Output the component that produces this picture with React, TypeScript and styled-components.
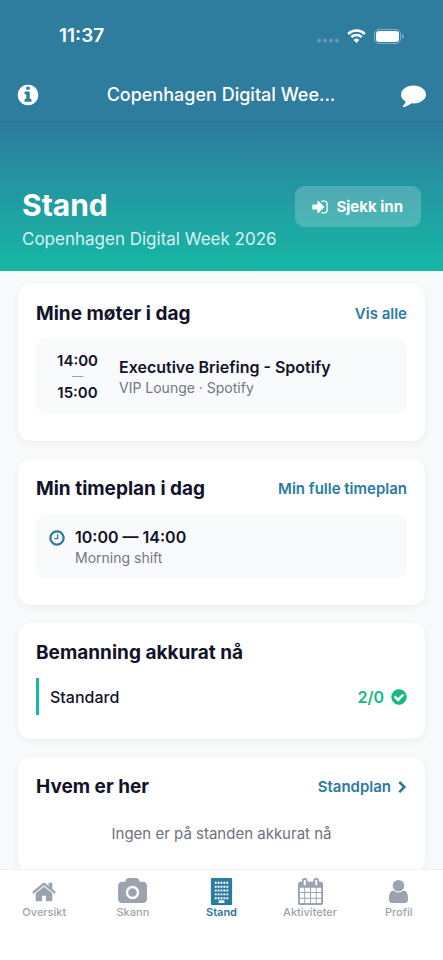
import React from "react";
import styled, { createGlobalStyle } from "styled-components";

const GlobalStyle = createGlobalStyle`
  *, *::before, *::after { box-sizing: border-box; }
  body {
    margin: 0;
    background: #f8fafc;
    color: #12122a;
    font-family: Inter, "Liberation Sans", sans-serif;
    -webkit-font-smoothing: antialiased;
  }
  h1, h2, p { margin: 0; }
  a { color: inherit; text-decoration: none; }
  button { font: inherit; color: inherit; cursor: pointer; }
`;

const ICONS = {
  info: "M1152 1376v-160q0-14-9-23t-23-9h-96v-512q0-14-9-23t-23-9h-320q-14 0-23 9t-9 23v160q0 14 9 23t23 9h96v320h-96q-14 0-23 9t-9 23v160q0 14 9 23t23 9h448q14 0 23-9t9-23zm-128-896v-160q0-14-9-23t-23-9h-192q-14 0-23 9t-9 23v160q0 14 9 23t23 9h192q14 0 23-9t9-23zm640 416q0 209-103 385.5t-279.5 279.5-385.5 103-385.5-103-279.5-279.5-103-385.5 103-385.5 279.5-279.5 385.5-103 385.5 103 279.5 279.5 103 385.5z",
  comment: "M1792 896q0 174-120 321.5t-326 233-450 85.5q-70 0-145-8-198 175-460 242-49 14-114 22-17 2-30.5-9t-17.5-29v-1q-3-4-.5-12t2-10 4.5-9.5l6-9 7-8.5 8-9q7-8 31-34.5t34.5-38 31-39.5 32.5-51 27-59 26-76q-157-89-247.5-220t-90.5-281q0-130 71-248.5t191-204.5 286-136.5 348-50.5 348 50.5 286 136.5 191 204.5 71 248.5z",
  signIn: "M1312 896q0 26-19 45l-544 544q-19 19-45 19t-45-19-19-45v-288h-448q-26 0-45-19t-19-45v-384q0-26 19-45t45-19h448v-288q0-26 19-45t45-19 45 19l544 544q19 19 19 45zm352-352v704q0 119-84.5 203.5t-203.5 84.5h-320q-13 0-22.5-9.5t-9.5-22.5q0-4-1-20t-.5-26.5 3-23.5 10-19.5 20.5-6.5h320q66 0 113-47t47-113v-704q0-66-47-113t-113-47h-312l-11.5-1-11.5-3-8-5.5-7-9-2-13.5q0-4-1-20t-.5-26.5 3-23.5 10-19.5 20.5-6.5h320q119 0 203.5 84.5t84.5 203.5z",
  clock: "M1024 544v448q0 14-9 23t-23 9h-320q-14 0-23-9t-9-23v-64q0-14 9-23t23-9h224v-352q0-14 9-23t23-9h64q14 0 23 9t9 23zm416 352q0-148-73-273t-198-198-273-73-273 73-198 198-73 273 73 273 198 198 273 73 273-73 198-198 73-273zm224 0q0 209-103 385.5t-279.5 279.5-385.5 103-385.5-103-279.5-279.5-103-385.5 103-385.5 279.5-279.5 385.5-103 385.5 103 279.5 279.5 103 385.5z",
  check: "M1412 734q0-28-18-46l-91-90q-19-19-45-19t-45 19l-408 407-226-226q-19-19-45-19t-45 19l-91 90q-18 18-18 46 0 27 18 45l362 362q19 19 45 19 27 0 46-19l543-543q18-18 18-45zm252 162q0 209-103 385.5t-279.5 279.5-385.5 103-385.5-103-279.5-279.5-103-385.5 103-385.5 279.5-279.5 385.5-103 385.5 103 279.5 279.5 103 385.5z",
  chevron: "M1363 877l-742 742q-19 19-45 19t-45-19l-166-166q-19-19-19-45t19-45l531-531-531-531q-19-19-19-45t19-45l166-166q19-19 45-19t45 19l742 742q19 19 19 45t-19 45z",
  home: "M1472 992v480q0 26-19 45t-45 19h-384v-384h-256v384h-384q-26 0-45-19t-19-45v-480q0-1 .5-3t.5-3l575-474 575 474q1 2 1 6zm223-69l-62 74q-8 9-21 11h-3q-13 0-21-7l-692-577-692 577q-12 8-24 7-13-2-21-11l-62-74q-8-10-7-23.5t11-21.5l719-599q32-26 76-26t76 26l244 204v-195q0-14 9-23t23-9h192q14 0 23 9t9 23v408l219 182q10 8 11 21.5t-7 23.5z",
  camera: "M896 672q119 0 203.5 84.5t84.5 203.5-84.5 203.5-203.5 84.5-203.5-84.5-84.5-203.5 84.5-203.5 203.5-84.5zm704-416q106 0 181 75t75 181v896q0 106-75 181t-181 75h-1408q-106 0-181-75t-75-181v-896q0-106 75-181t181-75h224l51-136q19-49 69.5-84.5t103.5-35.5h512q53 0 103.5 35.5t69.5 84.5l51 136h224zm-704 1152q185 0 316.5-131.5t131.5-316.5-131.5-316.5-316.5-131.5-316.5 131.5-131.5 316.5 131.5 316.5 316.5 131.5z",
  building:
    "M256 0h1280q64 0 64 64v1664q0 64-64 64h-1280q-64 0-64-64v-1664q0-64 64-64z" +
    [256, 512, 768, 1024, 1280]
      .map((y) => [448, 640, 832, 1024, 1216].map((x) => `M${x} ${y}v128h128v-128z`).join(""))
      .join("") +
    "M704 1472v192h384v-192z",
  calendar: "M192 1664h288v-288h-288v288zm352 0h320v-288h-320v288zm-352-352h288v-320h-288v320zm352 0h320v-320h-320v320zm-352-384h288v-288h-288v288zm736 736h320v-288h-320v288zm-384-736h320v-288h-320v288zm768 736h288v-288h-288v288zm-384-352h320v-320h-320v320zm-352-864v-288q0-13-9.5-22.5t-22.5-9.5h-64q-13 0-22.5 9.5t-9.5 22.5v288q0 13 9.5 22.5t22.5 9.5h64q13 0 22.5-9.5t9.5-22.5zm736 864h288v-320h-288v320zm-384-384h320v-288h-320v288zm384 0h288v-288h-288v288zm32-480v-288q0-13-9.5-22.5t-22.5-9.5h-64q-13 0-22.5 9.5t-9.5 22.5v288q0 13 9.5 22.5t22.5 9.5h64q13 0 22.5-9.5t9.5-22.5zm384-64v1280q0 52-38 90t-90 38h-1408q-52 0-90-38t-38-90v-1280q0-52 38-90t90-38h128v-96q0-66 47-113t113-47h64q66 0 113 47t47 113v96h384v-96q0-66 47-113t113-47h64q66 0 113 47t47 113v96h128q52 0 90 38t38 90z",
  user: "M1536 1399q0 109-62.5 187t-150.5 78h-854q-88 0-150.5-78t-62.5-187q0-85 8.5-160.5t31.5-152 58.5-131 94-89 134.5-34.5q131 128 313 128t313-128q76 0 134.5 34.5t94 89 58.5 131 31.5 152 8.5 160.5zm-256-887q0 159-112.5 271.5t-271.5 112.5-271.5-112.5-112.5-271.5 112.5-271.5 271.5-112.5 271.5 112.5 112.5 271.5z",
};

type IconName = keyof typeof ICONS;

const IconSvg = styled.svg<{ $size: number }>`
  display: block;
  flex: none;
  width: ${(p) => p.$size}px;
  height: ${(p) => p.$size}px;
  fill: currentColor;
  overflow: visible;
`;

function Icon({ name, size }: { name: IconName; size: number }) {
  return (
    <IconSvg $size={size} viewBox="0 0 1792 1792" aria-hidden="true">
      <path d={ICONS[name]} fillRule={name === "building" ? "evenodd" : "nonzero"} />
    </IconSvg>
  );
}

const Screen = styled.div`
  display: flex;
  flex-direction: column;
  height: 100vh;
`;

const TopBar = styled.header`
  flex: none;
  background: #2e7c9e;
  color: #fff;
  border-bottom: 1px solid #2b7495;
`;

const StatusBar = styled.div`
  display: flex;
  align-items: center;
  justify-content: space-between;
  padding: 24px 39px 20px 59px;
`;

const Clock = styled.time`
  font-size: 19px;
  font-weight: 600;
  line-height: 24px;
`;

const StatusIcons = styled.div`
  display: flex;
  align-items: center;
  gap: 8px;
`;

const StatusSvg = styled.svg`
  display: block;
`;

const TitleBar = styled.div`
  display: grid;
  grid-template-columns: 27px 1fr 27px;
  align-items: center;
  height: 53px;
  padding: 0 17px 0 16px;
`;

const BarTitle = styled.p`
  font-size: 18px;
  font-weight: 500;
  line-height: 24px;
  text-align: center;
  white-space: nowrap;
`;

const IconButton = styled.button`
  display: flex;
  padding: 0;
  border: 0;
  background: none;

  &:last-child { justify-content: flex-end; }
`;

const Content = styled.main`
  flex: 1;
  min-height: 0;
  overflow-y: auto;
  scrollbar-width: none;
`;

const Hero = styled.section`
  display: flex;
  align-items: flex-start;
  justify-content: space-between;
  padding: 64px 22px 21px;
  background: linear-gradient(#2e7c9e, #16b8a5);
  color: #fff;
`;

const HeroTitle = styled.h1`
  font-size: 30px;
  font-weight: 700;
  line-height: 38px;
`;

const HeroSubtitle = styled.p`
  margin-top: 4px;
  font-size: 17px;
  line-height: 22px;
  color: rgba(255, 255, 255, 0.85);
`;

const CheckInButton = styled.button`
  display: flex;
  align-items: center;
  gap: 7px;
  height: 41px;
  padding: 0 18px 0 16px;
  border: 0;
  border-radius: 9px;
  background: rgba(255, 255, 255, 0.2);
  font-size: 15px;
  font-weight: 700;
`;

const CardList = styled.div`
  display: flex;
  flex-direction: column;
  gap: 18px;
  padding: 13px 18px 18px;
`;

const Card = styled.section`
  padding: 18px 18px 27px;
  border-radius: 13px;
  background: #fff;
  box-shadow: 0 2px 9px rgba(15, 23, 42, 0.06);
`;

const CardHeader = styled.div`
  display: flex;
  align-items: center;
  justify-content: space-between;
  margin-bottom: 13px;
`;

const CardTitle = styled.h2`
  font-size: 19px;
  font-weight: 700;
  line-height: 24px;
`;

const CardLink = styled.a`
  display: flex;
  align-items: center;
  gap: 5px;
  font-size: 15px;
  font-weight: 600;
  line-height: 24px;
  color: #2a7b9f;

  > svg { margin-right: -2px; }
`;

const Entry = styled.div`
  display: flex;
  align-items: center;
  border-radius: 9px;
  background: #f9fafc;
`;

const MeetingEntry = styled(Entry)`
  gap: 13px;
  padding: 12px 13px;
`;

const ShiftEntry = styled(Entry)`
  align-items: flex-start;
  gap: 9px;
  padding: 12px 12px 11px;
  color: #2a7b9f;

  > svg { margin-top: 3px; }
`;

const TimeRange = styled.div`
  display: flex;
  flex-direction: column;
  align-items: center;
  width: 57px;
  font-size: 15px;
  font-weight: 600;
  line-height: 19px;
`;

const Dash = styled.span`
  font-size: 11px;
  font-weight: 400;
  line-height: 13px;
  color: #9aa1ae;
`;

const EntryTitle = styled.p`
  font-size: 16px;
  font-weight: 600;
  line-height: 22px;
  color: #12122a;
`;

const EntryDetail = styled.p`
  font-size: 14px;
  line-height: 19px;
  color: #717784;
`;

const StaffingRow = styled.div`
  display: flex;
  align-items: center;
  justify-content: space-between;
  height: 37px;
  margin-bottom: -3px;
  padding-left: 11px;
  border-left: 3px solid #16b8a5;
  font-size: 16px;
  font-weight: 500;
`;

const StaffingCount = styled.span`
  display: flex;
  align-items: center;
  gap: 6px;
  margin-right: -1px;
  font-weight: 600;
  color: #12b981;
`;

const EmptyNote = styled.p`
  padding-top: 11px;
  font-size: 15px;
  line-height: 22px;
  text-align: center;
  color: #6b7280;
`;

const TabBar = styled.nav`
  display: grid;
  grid-template-columns: repeat(5, 1fr);
  flex: none;
  height: 91px;
  padding-top: 8px;
  border-top: 1px solid #f1f2f5;
  background: #fff;
`;

const Tab = styled.a<{ $active?: boolean }>`
  display: flex;
  flex-direction: column;
  align-items: center;
  font-size: 11px;
  font-weight: ${(p) => (p.$active ? 600 : 500)};
  line-height: 14px;
  color: ${(p) => (p.$active ? "#2a7b9f" : "#9ca3b0")};
`;

const TabIcon = styled.span`
  display: grid;
  place-items: center;
  height: 27px;
`;

const TABS: { label: string; icon: IconName; size: number; active?: boolean }[] = [
  { label: "Oversikt", icon: "home", size: 26 },
  { label: "Skann", icon: "camera", size: 27 },
  { label: "Stand", icon: "building", size: 27, active: true },
  { label: "Aktiviteter", icon: "calendar", size: 27 },
  { label: "Profil", icon: "user", size: 27 },
];

export default function App() {
  return (
    <Screen>
      <GlobalStyle />
      <TopBar>
        <StatusBar>
          <Clock>11:37</Clock>
          <StatusIcons>
            <StatusSvg width="22" height="16" viewBox="0 0 22 16" fill="#fff" fillOpacity="0.25" aria-hidden="true">
              <circle cx="2" cy="12.5" r="2" />
              <circle cx="8" cy="12.5" r="2" />
              <circle cx="14" cy="12.5" r="2" />
              <circle cx="20" cy="12.5" r="2" />
            </StatusSvg>
            <StatusSvg width="19" height="14" viewBox="0 0 19 14" fill="none" stroke="#fff" strokeWidth="2.5" aria-hidden="true">
              <path d="M1.2 5a11.8 11.8 0 0 1 16.6 0" />
              <path d="M4.3 8.2a7.4 7.4 0 0 1 10.4 0" />
              <path d="M9.5 14L6.6 11a4.1 4.1 0 0 1 5.8 0z" fill="#fff" stroke="none" />
            </StatusSvg>
            <StatusSvg width="30" height="15" viewBox="0 0 30 15" aria-hidden="true">
              <rect x="0.5" y="0.5" width="26" height="14" rx="4.5" fill="none" stroke="#fff" strokeOpacity="0.4" />
              <rect x="2" y="2" width="23" height="11" rx="3" fill="#fff" />
              <path d="M28.2 5.2v4.6c1-.4 1.5-1.2 1.5-2.3s-.5-1.9-1.5-2.3z" fill="#fff" fillOpacity="0.5" />
            </StatusSvg>
          </StatusIcons>
        </StatusBar>
        <TitleBar>
          <IconButton aria-label="Info"><Icon name="info" size={24} /></IconButton>
          <BarTitle>Copenhagen Digital Wee...</BarTitle>
          <IconButton aria-label="Chat"><Icon name="comment" size={25} /></IconButton>
        </TitleBar>
      </TopBar>

      <Content>
        <Hero>
          <div>
            <HeroTitle>Stand</HeroTitle>
            <HeroSubtitle>Copenhagen Digital Week 2026</HeroSubtitle>
          </div>
          <CheckInButton><Icon name="signIn" size={18} />Sjekk inn</CheckInButton>
        </Hero>

        <CardList>
          <Card>
            <CardHeader>
              <CardTitle>Mine møter i dag</CardTitle>
              <CardLink href="#meetings">Vis alle</CardLink>
            </CardHeader>
            <MeetingEntry>
              <TimeRange>
                <span>14:00</span>
                <Dash>—</Dash>
                <span>15:00</span>
              </TimeRange>
              <div>
                <EntryTitle>Executive Briefing - Spotify</EntryTitle>
                <EntryDetail>VIP Lounge · Spotify</EntryDetail>
              </div>
            </MeetingEntry>
          </Card>

          <Card>
            <CardHeader>
              <CardTitle>Min timeplan i dag</CardTitle>
              <CardLink href="#schedule">Min fulle timeplan</CardLink>
            </CardHeader>
            <ShiftEntry>
              <Icon name="clock" size={18} />
              <div>
                <EntryTitle>10:00 — 14:00</EntryTitle>
                <EntryDetail>Morning shift</EntryDetail>
              </div>
            </ShiftEntry>
          </Card>

          <Card>
            <CardHeader>
              <CardTitle>Bemanning akkurat nå</CardTitle>
            </CardHeader>
            <StaffingRow>
              <span>Standard</span>
              <StaffingCount>2/0<Icon name="check" size={18} /></StaffingCount>
            </StaffingRow>
          </Card>

          <Card>
            <CardHeader>
              <CardTitle>Hvem er her</CardTitle>
              <CardLink href="#plan">Standplan<Icon name="chevron" size={13} /></CardLink>
            </CardHeader>
            <EmptyNote>Ingen er på standen akkurat nå</EmptyNote>
          </Card>
        </CardList>
      </Content>

      <TabBar>
        {TABS.map((t) => (
          <Tab key={t.label} href={`#${t.icon}`} $active={t.active} aria-current={t.active ? "page" : undefined}>
            <TabIcon><Icon name={t.icon} size={t.size} /></TabIcon>
            {t.label}
          </Tab>
        ))}
      </TabBar>
    </Screen>
  );
}
